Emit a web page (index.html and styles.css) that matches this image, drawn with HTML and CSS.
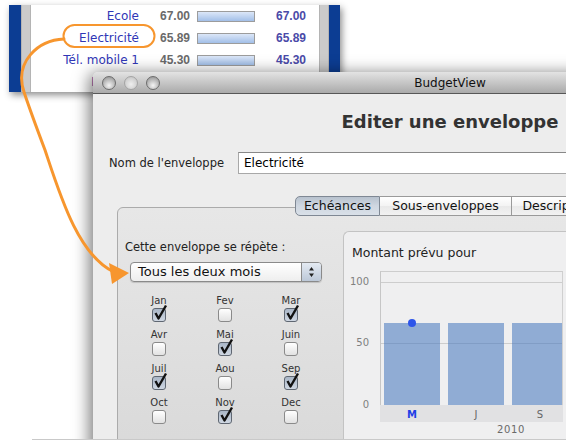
FILE: index.html
```html
<!DOCTYPE html>
<html lang="fr">
<head>
<meta charset="utf-8">
<title>BudgetView</title>
<link rel="stylesheet" href="styles.css">
</head>
<body>
<div class="listpanel">
  <div class="edge-blue"></div>
  <div class="edge-gray"></div>
  <div class="list">
    <div class="row"><span class="lbl">Ecole</span><span class="num">67.00</span><span class="lbar"></span><span class="val">67.00</span></div>
    <div class="row"><span class="lbl">Electricité</span><span class="num">65.89</span><span class="lbar"></span><span class="val">65.89</span></div>
    <div class="row"><span class="lbl">Tél. mobile 1</span><span class="num">45.30</span><span class="lbar"></span><span class="val">45.30</span></div>
    <div class="row"><span class="lbl">Internet</span><span class="num">29.90</span><span class="lbar"></span><span class="val">29.90</span></div>
  </div>
  <div class="edge-gray"></div>
  <div class="edge-blue edge-right"></div>
</div>

<div class="window">
  <div class="titlebar">
    <div class="lights"><span class="light"></span><span class="light off"></span><span class="light"></span></div>
    <div class="title">BudgetView</div>
    <div></div>
  </div>
  <div class="wbody">
    <h1 class="heading">Editer une enveloppe</h1>
    <div class="namerow">
      <span class="namelabel">Nom de l'enveloppe</span>
      <div class="input">Electricité</div>
    </div>
    <div class="tabbox">
      <div class="tabs">
        <span class="tab tab-a sel">Echéances</span>
        <span class="tab tab-b">Sous-enveloppes</span>
        <span class="tab tab-c">Description</span>
      </div>
      <div class="tabpanel">
        <div class="leftcol">
          <div class="repeat">Cette enveloppe se répète :</div>
          <div class="select">
            <span class="seltext">Tous les deux mois</span>
            <span class="stepper">
              <svg width="19" height="18" viewBox="0 0 19 18"><path d="M9.5 4 L12 7.5 L7 7.5 Z M9.5 14 L12 10.5 L7 10.5 Z" fill="#222"/></svg>
            </span>
          </div>
          <div class="months">
            <div class="month"><span>Jan</span><span class="cb on"><svg viewBox="0 0 16 18"><path d="M3.5 9 L6.5 14.5 L14 1.5" fill="none" stroke="#111" stroke-width="2.4" stroke-linejoin="round"/></svg></span></div>
            <div class="month"><span>Fev</span><span class="cb"></span></div>
            <div class="month"><span>Mar</span><span class="cb on"><svg viewBox="0 0 16 18"><path d="M3.5 9 L6.5 14.5 L14 1.5" fill="none" stroke="#111" stroke-width="2.4" stroke-linejoin="round"/></svg></span></div>
            <div class="month"><span>Avr</span><span class="cb"></span></div>
            <div class="month"><span>Mai</span><span class="cb on"><svg viewBox="0 0 16 18"><path d="M3.5 9 L6.5 14.5 L14 1.5" fill="none" stroke="#111" stroke-width="2.4" stroke-linejoin="round"/></svg></span></div>
            <div class="month"><span>Juin</span><span class="cb"></span></div>
            <div class="month"><span>Juil</span><span class="cb on"><svg viewBox="0 0 16 18"><path d="M3.5 9 L6.5 14.5 L14 1.5" fill="none" stroke="#111" stroke-width="2.4" stroke-linejoin="round"/></svg></span></div>
            <div class="month"><span>Aou</span><span class="cb"></span></div>
            <div class="month"><span>Sep</span><span class="cb on"><svg viewBox="0 0 16 18"><path d="M3.5 9 L6.5 14.5 L14 1.5" fill="none" stroke="#111" stroke-width="2.4" stroke-linejoin="round"/></svg></span></div>
            <div class="month"><span>Oct</span><span class="cb"></span></div>
            <div class="month"><span>Nov</span><span class="cb on"><svg viewBox="0 0 16 18"><path d="M3.5 9 L6.5 14.5 L14 1.5" fill="none" stroke="#111" stroke-width="2.4" stroke-linejoin="round"/></svg></span></div>
            <div class="month"><span>Dec</span><span class="cb"></span></div>
          </div>
        </div>
        <div class="chart">
          <div class="ctitle">Montant prévu pour</div>
          <div class="plotarea">
            <div class="yaxis">
              <span class="ylab" style="top:5px">100</span>
              <span class="ylab" style="top:66px">50</span>
              <span class="ylab" style="top:128px">0</span>
            </div>
            <div class="plot">
              <div class="gridline" style="top:10px"></div>
              <div class="gridline" style="top:71px"></div>
              <div class="bars">
                <div class="bar" style="height:82px"><span class="dot"></span></div>
                <div class="bar" style="height:82px"></div>
                <div class="bar" style="height:82px"></div>
              </div>
            </div>
          </div>
          <div class="xband">
            <span class="xlab cur">M</span>
            <span class="xlab">J</span>
            <span class="xlab">S</span>
          </div>
          <div class="year">2010</div>
        </div>
      </div>
    </div>
  </div>
</div>

<svg class="callout" width="566" height="442" viewBox="0 0 566 442">
  <rect x="63.5" y="25" width="91" height="22" rx="11" fill="none" stroke="#f7962e" stroke-width="2"/>
  <path d="M64 39 C38 40 14 62 24 92 C31 113 45 150 45 150 C60 195 78 255 114 272" fill="none" stroke="#f7962e" stroke-width="3" stroke-linecap="round"/>
  <polygon points="129,273 109,263 112,284" fill="#f7962e"/>
</svg>
<div class="bottomline"></div>
</body>
</html>
```
FILE: styles.css
```css
body {
  margin: 0;
  width: 566px;
  height: 442px;
  overflow: hidden;
  position: relative;
  background: #fff;
  font-family: "DejaVu Sans", "Liberation Sans", sans-serif;
  color: #222;
}

/* background list panel */
.listpanel {
  position: absolute;
  left: 9px;
  top: 5px;
  width: 331px;
  height: 87px;
  display: flex;
  box-shadow: 2px 3px 7px rgba(0, 0, 0, 0.45);
}
.edge-blue { width: 12px; background: #0c3d93; }
.edge-right { width: 11px; }
.edge-gray {
  width: 10px;
  box-sizing: border-box;
  background: #cbcbcb;
  border-left: 1px solid #b4b4b4;
  border-right: 1px solid #b4b4b4;
}
.list { flex: 1; background: #fff; overflow: hidden; }
.row {
  display: grid;
  grid-template-columns: 108px 58px 58px 51px;
  align-items: center;
  height: 22px;
}
.lbl { text-align: right; font-size: 12px; color: #3036b6; white-space: nowrap; }
.num {
  padding-left: 21px;
  font-family: "Liberation Sans", sans-serif;
  font-weight: bold;
  font-size: 12px;
  color: #6a6a6a;
}
.lbar {
  height: 11px;
  box-sizing: border-box;
  border: 1px solid #9c9c9c;
  background: linear-gradient(#dce7f8, #a2bfe8);
}
.val {
  text-align: right;
  font-family: "Liberation Sans", sans-serif;
  font-weight: bold;
  font-size: 12px;
  color: #4a4aa8;
}

/* window */
.window {
  position: absolute;
  left: 93px;
  top: 72px;
  width: 714px;
  height: 380px;
  background: #ededed;
  border-radius: 5px 5px 0 0;
  box-shadow: -2px 3px 16px 2px rgba(0, 0, 0, 0.5);
}
.titlebar {
  height: 21px;
  border-bottom: 1px solid #575757;
  border-radius: 5px 5px 0 0;
  background: linear-gradient(#e3e3e3, #aaaaaa);
  display: grid;
  grid-template-columns: 1fr auto 1fr;
  align-items: center;
}
.lights { display: flex; gap: 8px; padding-left: 9px; }
.light {
  width: 14px;
  height: 14px;
  box-sizing: border-box;
  border-radius: 50%;
  border: 1px solid #6c6c6c;
  background: radial-gradient(circle at 50% 70%, #f4f4f4 0, #c4c4c4 45%, #8a8a8a 100%);
}
.light.off {
  border-color: #a4a4a4;
  background: radial-gradient(circle at 50% 60%, #eeeeee 0, #d2d2d2 60%, #bcbcbc 100%);
}
.title { font-size: 12px; color: #111; }

.wbody { padding-top: 17px; }
.heading {
  margin: 0;
  font-size: 18px;
  line-height: 22px;
  font-weight: bold;
  text-align: center;
  color: #333;
}
.namerow {
  display: flex;
  align-items: center;
  margin: 19px 24px 0 16px;
}
.namelabel { width: 129px; font-size: 11.5px; color: #222; }
.input {
  flex: 1;
  height: 22px;
  box-sizing: border-box;
  border: 1px solid #a8a8a8;
  border-top-color: #888;
  background: #fff;
  padding-left: 5px;
  font-size: 12px;
  line-height: 20px;
  color: #000;
}

.tabbox { margin: 22px 24px 0; }
.tabs {
  display: flex;
  justify-content: center;
  position: relative;
  z-index: 1;
  height: 20px;
}
.tab {
  height: 20px;
  box-sizing: border-box;
  text-align: center;
  font-size: 12.5px;
  line-height: 18px;
  color: #111;
  border: 1px solid #9a9a9a;
  border-left: none;
  background: linear-gradient(#ffffff, #f3f3f3 50%, #e9e9e9 51%, #f2f2f2);
}
.tab-a { width: 85px; border-left: 1px solid #8a8a8a; border-radius: 5px 0 0 5px; }
.tab-b { width: 132px; }
.tab-c { width: 93px; }
.tab.sel {
  border-color: #7f8894;
  background: linear-gradient(#b8c2ce, #cfd7e1 50%, #d9e0e8);
}

.tabpanel {
  margin-top: -9px;
  height: 300px;
  box-sizing: border-box;
  border: 1px solid #ababab;
  border-radius: 6px;
  background: linear-gradient(#e7e7e7, #d6d6d6);
  display: flex;
  gap: 7px;
  padding: 23px 0 0 7px;
}
.leftcol { width: 211px; flex: none; }
.repeat { margin-top: 9px; font-size: 11.5px; line-height: 14px; color: #222; }
.select {
  margin: 8px 0 0 5px;
  width: 192px;
  height: 20px;
  box-sizing: border-box;
  border: 1px solid #8a8a8a;
  border-radius: 4px;
  display: flex;
  background: linear-gradient(#ffffff, #eeeeee);
  box-shadow: 0 1px 1px rgba(0, 0, 0, 0.15);
  overflow: hidden;
}
.seltext { flex: 1; font-size: 13px; line-height: 18px; padding-left: 7px; color: #111; }
.stepper {
  width: 19px;
  border-left: 1px solid #8a8a8a;
  background: linear-gradient(#e4eaf2, #bcc8d8);
  display: flex;
}
.months {
  display: grid;
  grid-template-columns: repeat(3, 66px);
  row-gap: 7px;
  margin: 13px 0 0 1px;
}
.month {
  display: flex;
  flex-direction: column;
  align-items: center;
  font-size: 10px;
  line-height: 12px;
  color: #333;
}
.cb {
  width: 14px;
  height: 14px;
  margin-top: 1px;
  box-sizing: border-box;
  border: 1px solid #8a8a8a;
  border-radius: 3px;
  background: linear-gradient(#ffffff, #e2e2e2);
  position: relative;
}
.cb.on {
  border-color: #5f6772;
  background: linear-gradient(#a9b6c7, #cfd7e2);
}
.cb svg {
  position: absolute;
  left: -1px;
  top: -5px;
  width: 16px;
  height: 18px;
  overflow: visible;
}

/* chart */
.chart {
  flex: 1;
  border: 1px solid #c3c3c3;
  border-right: none;
  border-bottom: none;
  border-radius: 6px 0 0 0;
  background: #efeff0;
}
.ctitle { margin: 13px 0 0 8px; font-size: 12.5px; line-height: 16px; color: #222; }
.plotarea { display: flex; margin-top: 10px; }
.yaxis { width: 36px; position: relative; }
.ylab {
  position: absolute;
  right: 11px;
  font-size: 10px;
  line-height: 12px;
  color: #808080;
}
.plot {
  width: 183px;
  height: 134px;
  box-sizing: border-box;
  border-left: 1px solid #c6c6c6;
  border-top: 1px solid #cdcdcd;
  border-right: 1px solid #d0d0d0;
  position: relative;
  overflow: hidden;
}
.gridline { position: absolute; left: 0; right: 0; height: 1px; background: #cdcdcd; }
.bars {
  position: relative;
  display: flex;
  align-items: flex-end;
  gap: 8px;
  height: 100%;
  padding-left: 3px;
}
.bar { width: 56px; flex: none; position: relative; background: rgba(70, 120, 190, 0.56); }
.dot {
  position: absolute;
  left: 24px;
  top: -4px;
  width: 8px;
  height: 8px;
  border-radius: 50%;
  background: #2d55ea;
}
.xband {
  margin-left: 36px;
  width: 183px;
  height: 17px;
  background: #e1e1e3;
  display: flex;
  gap: 8px;
  padding-left: 4px;
  box-sizing: border-box;
}
.xlab { width: 56px; flex: none; text-align: center; font-size: 10px; line-height: 19px; color: #666; }
.xlab.cur { color: #1f3fe6; font-weight: bold; }
.year {
  padding-left: 153px;
  font-size: 10px;
  line-height: 16px;
  letter-spacing: 0.6px;
  color: #6a6a6a;
}

.callout { position: absolute; left: 0; top: 0; }
.bottomline {
  position: absolute;
  left: 32px;
  right: 0;
  top: 439px;
  height: 3px;
  border-top: 1px solid #c9c9c9;
  background: #fff;
}
```
